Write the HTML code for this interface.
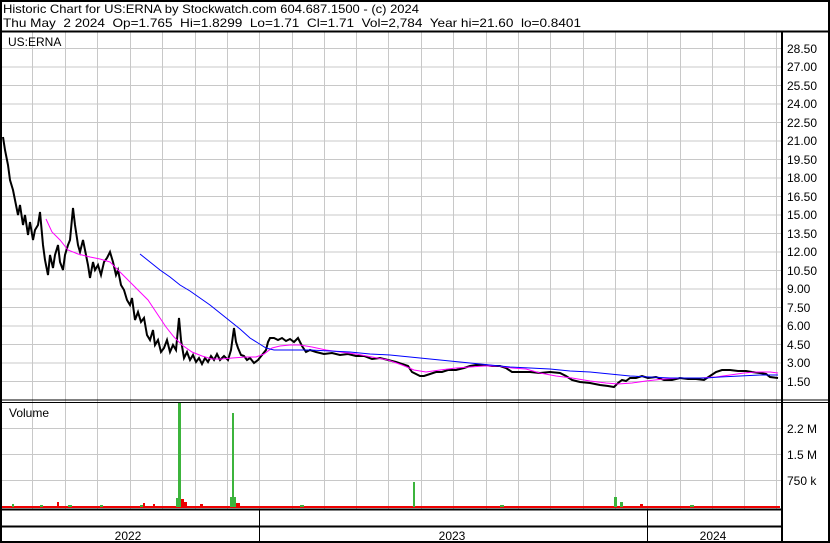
<!DOCTYPE html>
<html><head><meta charset="utf-8"><style>
html,body{margin:0;padding:0;background:#fff}
svg{display:block}
text{font-family:"Liberation Sans",Arial,sans-serif;font-size:12px;fill:#000}
</style></head><body>
<svg width="830" height="543" viewBox="0 0 830 543" xmlns="http://www.w3.org/2000/svg">
<rect x="0" y="0" width="830" height="543" fill="#fff"/>
<text x="3" y="13" font-size="13" textLength="416" lengthAdjust="spacingAndGlyphs">Historic Chart for US:ERNA by Stockwatch.com 604.687.1500 - (c) 2024</text>
<text x="3" y="27" font-size="13" xml:space="preserve" textLength="578" lengthAdjust="spacingAndGlyphs">Thu May  2 2024  Op=1.765  Hi=1.8299  Lo=1.71  Cl=1.71  Vol=2,784  Year hi=21.60  lo=0.8401</text>
<g stroke="#c8c8c8" stroke-width="1">
<path d="M2 48.5H781M2 67H781M2 85.5H781M2 104H781M2 122.5H781M2 141H781M2 159.5H781M2 178H781M2 196.5H781M2 215H781M2 233.5H781M2 252H781M2 270.5H781M2 289H781M2 307.5H781M2 326H781M2 344.5H781M2 363H781M2 381.5H781"/>
<path d="M2 428.5H781M2 454.5H781M2 480.5H781"/>
<path d="M32.5 32V509M65.5 32V509M97.5 32V509M130.5 32V509M162.5 32V509M195.5 32V509M227.5 32V509M259.5 32V509M292.5 32V509M324.5 32V509M356.5 32V509M388.5 32V509M421.5 32V509M453.5 32V509M486.5 32V509M518.5 32V509M550.5 32V509M583.5 32V509M615.5 32V509M647.5 32V509M680.5 32V509M712.5 32V509M744.5 32V509M776.5 32V509"/>
</g>
<text x="8" y="46" font-size="13">US:ERNA</text>
<text x="9" y="417">Volume</text>
<g>
<text x="787" y="53">28.50</text><text x="787" y="71">27.00</text><text x="787" y="90">25.50</text><text x="787" y="108">24.00</text><text x="787" y="127">22.50</text><text x="787" y="145">21.00</text><text x="787" y="164">19.50</text><text x="787" y="182">18.00</text><text x="787" y="201">16.50</text><text x="787" y="219">15.00</text><text x="787" y="238">13.50</text><text x="787" y="256">12.00</text><text x="787" y="275">10.50</text><text x="787" y="293">9.00</text><text x="787" y="312">7.50</text><text x="787" y="330">6.00</text><text x="787" y="349">4.50</text><text x="787" y="367">3.00</text><text x="787" y="386">1.50</text>
<text x="787" y="433">2.2 M</text><text x="787" y="459">1.5 M</text><text x="787" y="485">750 k</text>
</g>
<polyline fill="none" stroke="#000" stroke-width="2" points="3,137 5,150 8,165 10,180 13,190 15,200 18,215 20,205 23,225 25,215 28,235 30,222 33,240 35,230 38,225 40,212 43,245 45,260 48,275 50,255 53,268 55,255 58,245 60,262 63,270 65,255 68,245 70,240 73,208 75,225 78,245 80,252 83,240 85,250 88,265 90,278 93,262 95,270 98,265 101,275 104,262 107,258 110,252 113,262 116,275 118,270 121,285 124,290 127,300 130,305 132,298 135,320 138,312 141,322 144,318 147,335 150,340 153,330 155,345 158,340 161,352 164,348 167,340 170,352 173,345 176,350 179,318 181,340 184,358 187,352 190,360 193,355 196,362 199,358 202,364 205,358 208,362 211,356 214,360 217,354 220,360 224,356 228,360 231,350 234,328 236,342 238,348 241,355 244,356 247,360 250,358 254,363 258,360 262,355 266,350 268,342 270,338 274,338 278,340 282,338 286,341 290,339 294,342 298,338 302,346 306,352 310,350 316,352 324,354 332,353 340,355 348,354 356,356 364,356 372,359 380,358 388,360 396,362 402,364 408,366 412,372 416,374 420,376 424,376 430,374 436,372 442,372 448,370 456,370 464,368 470,366 476,365 484,365 492,366 500,366 506,368 512,372 520,372 530,372 540,373 550,372 560,373 566,376 572,380 580,382 590,383 600,385 608,386 614,387 618,383 622,380 626,381 630,378 636,378 642,376 648,378 656,377 664,380 672,380 680,378 688,379 696,379 704,380 710,376 716,372 722,370 730,370 738,371 746,371 752,372 760,373 766,374 770,377 778,378"/>
<polyline fill="none" stroke="#f0f" stroke-width="1" points="46,219 52,232 60,240 68,250 78,254 90,257 100,259 110,262 118,270 128,280 138,290 148,300 158,315 166,327 174,337 182,345 192,352 202,356 212,359 222,359 232,358 246,357 256,357 264,354 272,348 280,346 290,345 300,345 312,347 326,350 340,352 356,354 372,357 388,360 402,365 414,370 426,372 440,370 456,368 470,367 484,366 498,366 512,368 526,369 540,373 556,376 572,378 590,381 606,383 618,384 632,383 646,381 664,379 680,378 700,378 716,377 730,375 744,373 756,372 770,372 778,373"/>
<polyline fill="none" stroke="#00f" stroke-width="1" points="140,254 150,262 160,270 170,277 180,285 190,291 200,298 210,305 220,313 230,321 240,329 250,338 258,343 266,348 274,350 290,350 310,350 330,351 350,352 370,354 390,355 410,357 430,359 450,361 470,363 490,365 510,367 530,368 550,369 570,371 590,372 610,374 630,376 650,377 670,378 690,378 706,378 720,377 740,376 760,375 778,375"/>
<rect x="2" y="506" width="778" height="2" fill="#e00"/>
<g fill="#3cb43c">
<rect x="12" y="504" width="2" height="3"/><rect x="40" y="505" width="3" height="2"/><rect x="68" y="505" width="4" height="2"/><rect x="100" y="505" width="3" height="2"/><rect x="140" y="505" width="3" height="2"/>
<rect x="178" y="402" width="3" height="105"/><rect x="176" y="498" width="2" height="9"/>
<rect x="232" y="413" width="2" height="94"/><rect x="230" y="497" width="6" height="10"/>
<rect x="413" y="482" width="2" height="25"/>
<rect x="614" y="497" width="3" height="10"/><rect x="620" y="502" width="3" height="5"/>
<rect x="300" y="505" width="4" height="2"/><rect x="500" y="505" width="4" height="2"/><rect x="690" y="505" width="4" height="2"/>
</g>
<g fill="#e00">
<rect x="57" y="502" width="2" height="5"/><rect x="143" y="503" width="2" height="4"/><rect x="181" y="499" width="3" height="8"/><rect x="184" y="502" width="3" height="5"/><rect x="236" y="503" width="4" height="4"/><rect x="153" y="504" width="2" height="3"/><rect x="200" y="504" width="3" height="3"/><rect x="640" y="504" width="3" height="3"/>
</g>
<g stroke="#000" fill="none">
<path d="M0 1H830" stroke-width="2"/>
<path d="M0 31.5H830" stroke-width="2"/>
<path d="M1 0V543" stroke-width="2"/>
<path d="M829 0V543" stroke-width="2"/>
<path d="M782 31V543" stroke-width="2"/>
<path d="M0 400H830M0 402.5H830" stroke-width="1"/>
<path d="M0 509.5H782" stroke-width="2"/>
<path d="M0 526.5H782" stroke-width="2"/>
<path d="M0 542H830" stroke-width="2"/>
<path d="M259.5 510V541M647.5 510V541" stroke-width="1"/>
</g>
<text x="128" y="540" font-size="13" text-anchor="middle">2022</text>
<text x="452" y="540" font-size="13" text-anchor="middle">2023</text>
<text x="713" y="540" font-size="13" text-anchor="middle">2024</text>
</svg>
</body></html>
